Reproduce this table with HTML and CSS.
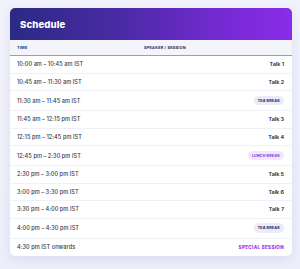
FILE: index.html
```html
<!DOCTYPE html>
<html>
<head>
<meta charset="utf-8">
<link rel="stylesheet" href="styles.css">
</head>
<body>
<div class="card">
  <div class="head"><h1>Schedule</h1></div>
  <div class="thead"><span>TIME</span><span>SPEAKER / SESSION</span></div>
  <div class="row"><span class="time">10:00 am – 10:45 am IST</span><span class="talk">Talk 1</span></div>
  <div class="row"><span class="time">10:45 am – 11:30 am IST</span><span class="talk">Talk 2</span></div>
  <div class="row tall"><span class="time">11:30 am – 11:45 am IST</span><span class="pill tea">TEA BREAK</span></div>
  <div class="row"><span class="time">11:45 am – 12:15 pm IST</span><span class="talk">Talk 3</span></div>
  <div class="row"><span class="time">12:15 pm – 12:45 pm IST</span><span class="talk">Talk 4</span></div>
  <div class="row tall"><span class="time">12:45 pm – 2:30 pm IST</span><span class="pill lunch">LUNCH BREAK</span></div>
  <div class="row"><span class="time">2:30 pm – 3:00 pm IST</span><span class="talk">Talk 5</span></div>
  <div class="row"><span class="time">3:00 pm – 3:30 pm IST</span><span class="talk">Talk 6</span></div>
  <div class="row"><span class="time">3:30 pm – 4:00 pm IST</span><span class="talk">Talk 7</span></div>
  <div class="row tall"><span class="time">4:00 pm – 4:30 pm IST</span><span class="pill tea">TEA BREAK</span></div>
  <div class="row last"><span class="time">4:30 pm IST onwards</span><span class="special">SPECIAL SESSION</span></div>
</div>
</body>
</html>
```
FILE: styles.css
```css
html, body {
  margin: 0;
  height: 100%;
}
body {
  background: linear-gradient(180deg, #f1f2fb 0%, #eceefa 100%);
  font-family: "Inter", "Liberation Sans", sans-serif;
  padding: 8px 8px 0 10px;
  box-sizing: border-box;
}
.card {
  width: 282px;
  background: #ffffff;
  border-radius: 5px;
  overflow: hidden;
  box-shadow: 0 3px 10px rgba(90, 90, 170, 0.12);
}
.head {
  height: 32px;
  display: flex;
  align-items: center;
  padding-left: 10px;
  background: linear-gradient(90deg, #2b2a84 0%, #4b2aa6 40%, #7a2ad8 80%, #8a2ce8 100%);
}
.head h1 {
  margin: 0;
  color: #ffffff;
  font-size: 9.6px;
  font-weight: 800;
  letter-spacing: 0.1px;
}
.thead {
  height: 15px;
  display: grid;
  grid-template-columns: 127px 1fr;
  align-items: center;
  padding: 0 8px 0 7px;
  background: #f4f5fb;
  border-bottom: 1px solid #a98bf4;
  font-size: 3.9px;
  font-weight: 700;
  color: #2c2b6e;
  letter-spacing: 0.2px;
}
.row {
  height: 17.5px;
  display: flex;
  align-items: center;
  justify-content: space-between;
  padding: 0 8px 0 7px;
  border-bottom: 1px solid #f0f1f6;
  box-sizing: border-box;
}
.row.tall { height: 20px; }
.row.last { border-bottom: none; height: 17px; }
.time {
  font-size: 5.6px;
  font-weight: 500;
  color: #3a3a48;
  letter-spacing: 0.05px;
}
.talk {
  font-size: 5.4px;
  font-weight: 600;
  color: #222230;
}
.pill {
  font-size: 3.6px;
  font-weight: 800;
  letter-spacing: 0.2px;
  border-radius: 6px;
  padding: 2.6px 4px;
}
.pill.tea {
  background: #ebecf5;
  color: #2e2d7a;
}
.pill.lunch {
  background: #f2e8fe;
  color: #8a44e6;
}
.special {
  font-size: 4.5px;
  font-weight: 800;
  color: #9233ea;
  letter-spacing: 0.35px;
}
```
